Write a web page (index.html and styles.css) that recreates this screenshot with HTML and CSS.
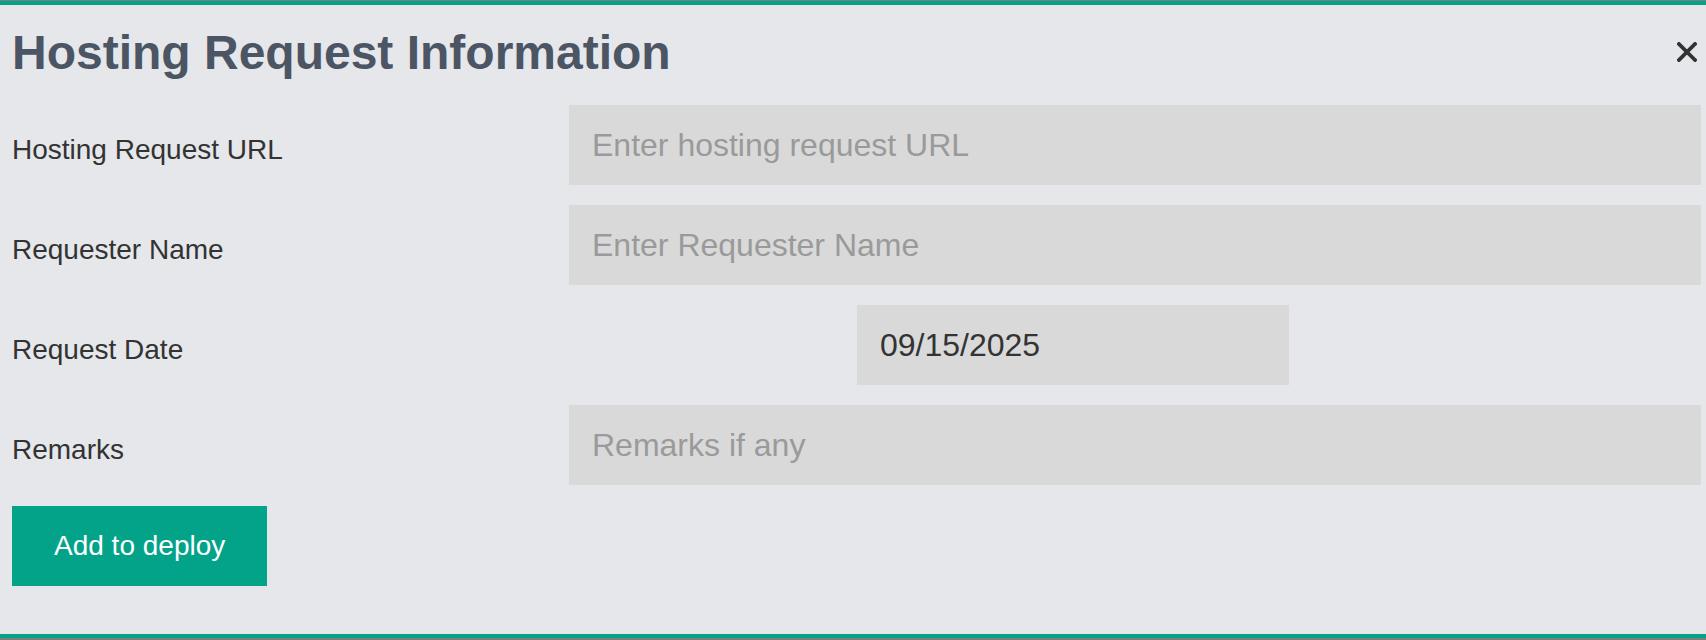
FILE: index.html
```html
<!DOCTYPE html>
<html lang="en">
<head>
<meta charset="utf-8">
<title>Hosting Request Information</title>
<link rel="stylesheet" href="styles.css">
</head>
<body>
<div class="modal">
  <div class="modal-header">
    <h1 class="modal-title">Hosting Request Information</h1>
    <button class="close-btn" type="button" aria-label="Close">
      <svg width="20" height="20" viewBox="0 0 20 20"><path d="M2 2 L18 18 M18 2 L2 18" stroke="#333" stroke-width="3.8" stroke-linecap="square" fill="none"/></svg>
    </button>
  </div>
  <form class="form">
    <div class="row">
      <label class="label">Hosting Request URL</label>
      <input class="field" type="text" placeholder="Enter hosting request URL">
    </div>
    <div class="row">
      <label class="label">Requester Name</label>
      <input class="field" type="text" placeholder="Enter Requester Name">
    </div>
    <div class="row">
      <label class="label">Request Date</label>
      <input class="field field-date" type="text" value="09/15/2025">
    </div>
    <div class="row">
      <label class="label">Remarks</label>
      <input class="field" type="text" placeholder="Remarks if any">
    </div>
    <div class="actions">
      <button class="submit-btn" type="button">Add to deploy</button>
    </div>
  </form>
</div>
</body>
</html>
```

FILE: styles.css
```css
html, body {
  margin: 0;
  padding: 0;
}
body {
  background: #7d7d7d;
  font-family: "Liberation Sans", Arial, sans-serif;
  height: 640px;
  overflow: hidden;
}
.modal {
  box-sizing: border-box;
  margin-top: 1px;
  height: 637px;
  background: #e5e7eb;
  border-top: 4px solid #02a389;
  border-bottom: 4px solid #02a389;
  padding: 0 5px 0 12px;
}
.modal-header {
  display: flex;
  align-items: flex-start;
  justify-content: space-between;
  padding-top: 20px;
}
.modal-title {
  margin: 0;
  font-size: 48px;
  line-height: 56px;
  font-weight: 700;
  color: #4b5563;
}
.close-btn {
  background: none;
  border: 0;
  padding: 0;
  margin: 17px 4px 0 0;
  width: 20px;
  height: 20px;
  display: block;
  cursor: pointer;
}
.close-btn svg {
  display: block;
}
.form {
  margin-top: 24px;
  display: flex;
  flex-direction: column;
  gap: 20px;
}
.row {
  display: grid;
  grid-template-columns: 557px 1fr;
  align-items: center;
}
.label {
  font-size: 28px;
  line-height: 40px;
  padding-top: 9px;
  color: #333333;
}
.field {
  box-sizing: border-box;
  height: 80px;
  width: 100%;
  border: 0;
  outline: none;
  background: #d9d9d9;
  padding: 0 23px;
  font-family: "Liberation Sans", Arial, sans-serif;
  font-size: 32px;
  color: #333333;
}
.field::placeholder {
  color: #9a9a9a;
}
.field-date {
  width: 432px;
  margin-left: 288px;
}
.actions {
  margin-top: 1px;
}
.submit-btn {
  height: 80px;
  padding: 0 42px;
  border: 0;
  background: #02a389;
  color: #ffffff;
  font-family: "Liberation Sans", Arial, sans-serif;
  font-size: 28px;
  cursor: pointer;
}
```
